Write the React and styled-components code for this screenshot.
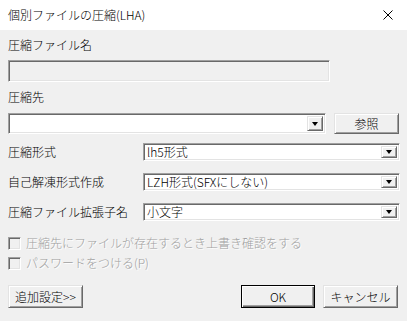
import React from "react";
import styled, { createGlobalStyle, css } from "styled-components";

const Global = createGlobalStyle`
  html, body { margin: 0; padding: 0; background: #f0f0f0; }
  * { box-sizing: border-box; }
`;

const Window = styled.div`
  width: 407px;
  height: 321px;
  display: flex;
  flex-direction: column;
  background: #f0f0f0;
  font-family: "Noto Sans CJK JP", "Noto Sans", sans-serif;
  font-size: 12px;
  font-weight: 300;
  color: #000;
  overflow: hidden;
`;

const TitleBar = styled.div`
  height: 30px;
  flex: none;
  background: #fff;
  display: flex;
  align-items: center;
  justify-content: space-between;
  padding: 0 14px 0 8px;
`;

const Title = styled.span`
  font-size: 12px;
  line-height: 14px;
  color: #000;
`;

const Body = styled.div`
  display: flex;
  flex-direction: column;
  padding: 8px 8px 0 8px;
`;

const Label = styled.div`
  font-size: 12px;
  line-height: 14px;
  margin-top: ${(p) => p.$mt || 0}px;
  white-space: nowrap;
`;

const sunken = css`
  border: 1px solid;
  border-color: #a0a0a0 #fff #fff #a0a0a0;
  box-shadow: inset 1px 1px #696969, inset -1px -1px #e3e3e3;
`;

const raised = css`
  border: 1px solid;
  border-color: #e3e3e3 #696969 #696969 #e3e3e3;
  box-shadow: inset 1px 1px #fff, inset -1px -1px #a0a0a0;
  background: #f0f0f0;
`;

const DisabledInput = styled.div`
  ${sunken};
  width: 322px;
  height: 22px;
  margin-top: 8px;
  background: #f0f0f0;
`;

const ComboRow = styled.div`
  display: flex;
  align-items: center;
  margin-top: 9px;
  gap: 8px;
`;

const Combo = styled.div`
  ${sunken};
  width: ${(p) => p.$w}px;
  height: ${(p) => p.$h}px;
  background: #fff;
  display: flex;
  align-items: center;
  justify-content: space-between;
  padding: 2px 2px 2px 3px;
`;

const ComboText = styled.span`
  font-size: 12px;
  line-height: 14px;
  white-space: nowrap;
`;

const ArrowBtn = styled.div`
  ${raised};
  width: 16px;
  height: 100%;
  display: flex;
  align-items: center;
  justify-content: center;
  flex: none;
`;

const Triangle = styled.div`
  width: 0;
  height: 0;
  border-left: 3.5px solid transparent;
  border-right: 3.5px solid transparent;
  border-top: 4px solid #000;
`;

const Button = styled.button`
  ${raised};
  width: ${(p) => p.$w}px;
  height: ${(p) => p.$h || 23}px;
  font-family: "Noto Sans CJK JP", "Noto Sans", sans-serif;
  font-size: 12px;
  font-weight: 300;
  line-height: 14px;
  color: #000;
  padding: 0;
  display: flex;
  align-items: center;
  justify-content: center;
  ${(p) =>
    p.$default &&
    css`
      border-color: #000;
      box-shadow: inset 1px 1px #fff, inset -1px -1px #696969, inset -2px -2px #a0a0a0;
    `}
`;

const Grid = styled.div`
  display: grid;
  grid-template-columns: 135px 257px;
  grid-auto-rows: 18px;
  row-gap: 12px;
  margin-top: 9px;
  align-items: center;
`;

const CheckRow = styled.div`
  display: flex;
  align-items: center;
  gap: 5px;
  height: 14px;
  margin-top: ${(p) => p.$mt}px;
`;

const CheckBox = styled.div`
  ${sunken};
  width: 13px;
  height: 13px;
  background: #f0f0f0;
  flex: none;
`;

const DisabledText = styled.span`
  color: #a0a0a0;
  text-shadow: 1px 1px #fff;
  font-size: 12px;
  line-height: 14px;
  white-space: nowrap;
`;

const ButtonRow = styled.div`
  display: flex;
  justify-content: space-between;
  margin-top: 15px;
  padding-right: 1px;
`;

const ButtonGroup = styled.div`
  display: flex;
  gap: 8px;
`;

function Select({ w, h, value }) {
  return (
    <Combo $w={w} $h={h}>
      <ComboText>{value}</ComboText>
      <ArrowBtn>
        <Triangle />
      </ArrowBtn>
    </Combo>
  );
}

export default function App() {
  return (
    <>
      <Global />
      <Window>
        <TitleBar>
          <Title>個別ファイルの圧縮(LHA)</Title>
          <svg width="10" height="10" viewBox="0 0 10 10">
            <path d="M0.5 0.5 L9.5 9.5 M9.5 0.5 L0.5 9.5" stroke="#000" strokeWidth="1" fill="none" />
          </svg>
        </TitleBar>
        <Body>
          <Label>圧縮ファイル名</Label>
          <DisabledInput />
          <Label $mt={8}>圧縮先</Label>
          <ComboRow>
            <Select w={322} h={21} value="" />
            <Button $w={66} $h={21}>参照</Button>
          </ComboRow>
          <Grid>
            <Label>圧縮形式</Label>
            <Select w={257} h={18} value="lh5形式" />
            <Label>自己解凍形式作成</Label>
            <Select w={257} h={18} value="LZH形式(SFXにしない)" />
            <Label>圧縮ファイル拡張子名</Label>
            <Select w={257} h={18} value="小文字" />
          </Grid>
          <CheckRow $mt={15}>
            <CheckBox />
            <DisabledText>圧縮先にファイルが存在するとき上書き確認をする</DisabledText>
          </CheckRow>
          <CheckRow $mt={6}>
            <CheckBox />
            <DisabledText>パスワードをつける(P)</DisabledText>
          </CheckRow>
          <ButtonRow>
            <Button $w={75}>追加設定&gt;&gt;</Button>
            <ButtonGroup>
              <Button $w={74} $default>OK</Button>
              <Button $w={75}>キャンセル</Button>
            </ButtonGroup>
          </ButtonRow>
        </Body>
      </Window>
    </>
  );
}
